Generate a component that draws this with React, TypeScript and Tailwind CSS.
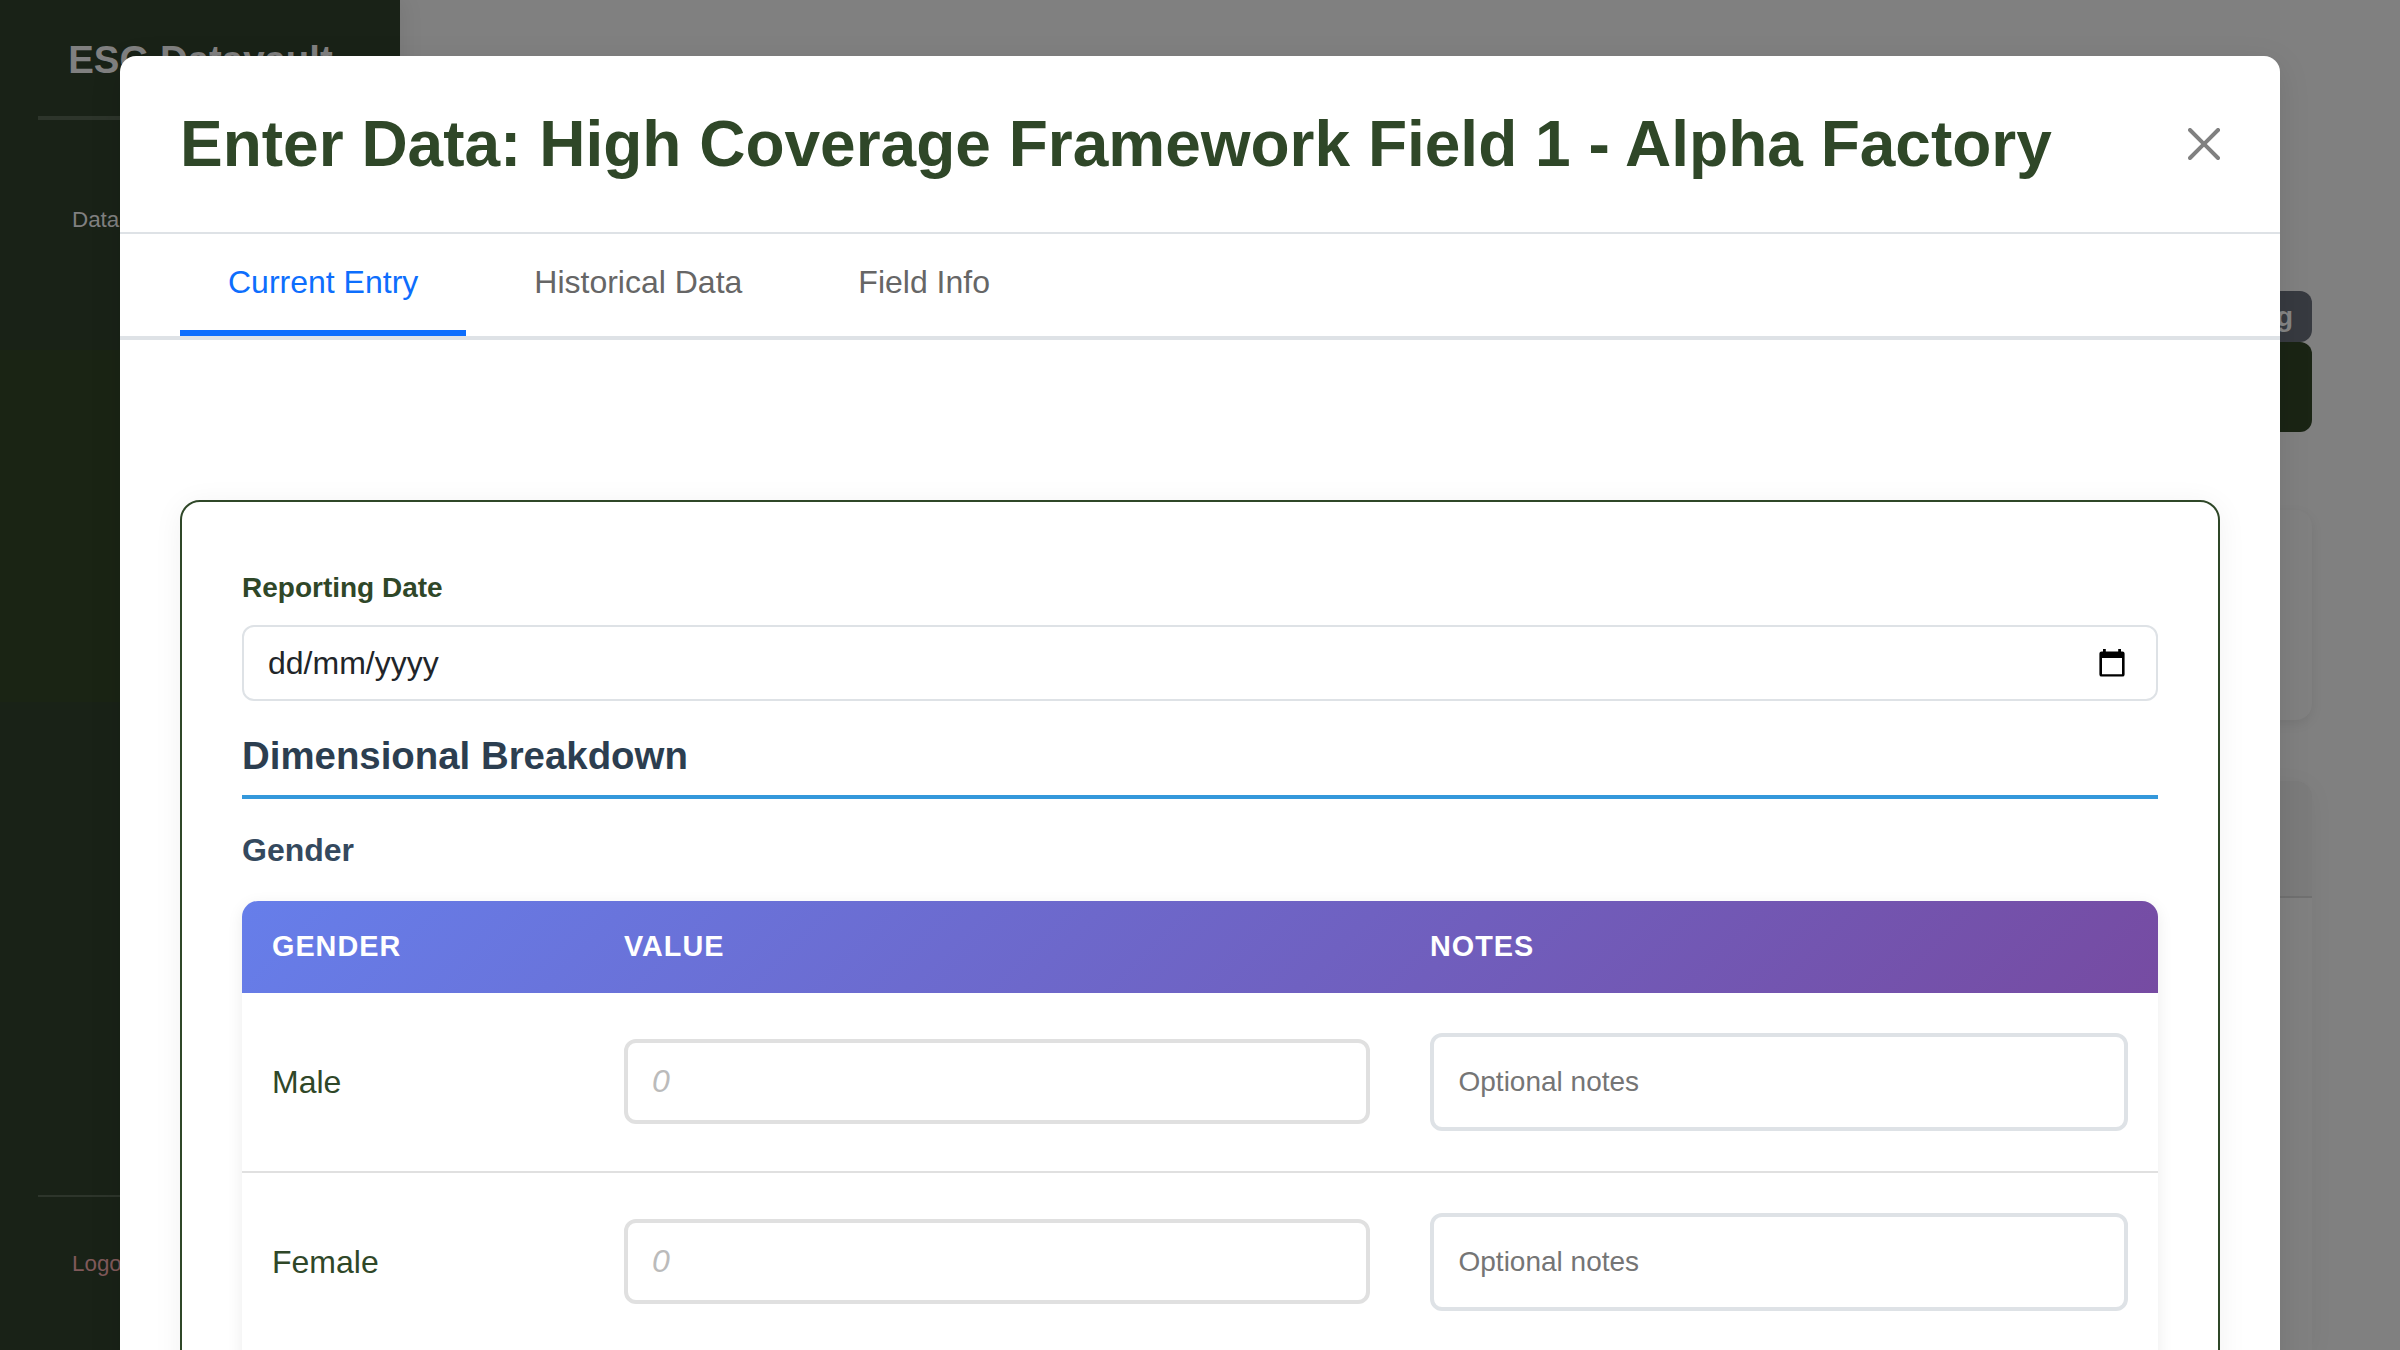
import type { ReactNode } from "react";

const tabs = ["Current Entry", "Historical Data", "Field Info"];
const rows = ["Male", "Female"];

function CloseIcon() {
  return (
    <svg viewBox="0 0 16 16" className="size-8 fill-[#808080]">
      <path d="M.293.293a1 1 0 0 1 1.414 0L8 6.586 14.293.293a1 1 0 1 1 1.414 1.414L9.414 8l6.293 6.293a1 1 0 0 1-1.414 1.414L8 9.414l-6.293 6.293a1 1 0 0 1-1.414-1.414L6.586 8 .293 1.707a1 1 0 0 1 0-1.414z" />
    </svg>
  );
}

function CalendarIcon() {
  return (
    <svg viewBox="0 0 26 28" className="-mt-px h-7 w-[26px] fill-black">
      <path
        fillRule="evenodd"
        d="M4 0h2.8v2.4h12.4V0H22v2.4h1.4A2.2 2.2 0 0 1 25.6 4.6v20.8a2.2 2.2 0 0 1-2.2 2.2H2.6A2.2 2.2 0 0 1 .4 25.4V4.6A2.2 2.2 0 0 1 2.6 2.4H4zM3 9v16.2h20V9z"
      />
    </svg>
  );
}

function Sidebar() {
  return (
    <aside className="flex w-[400px] shrink-0 flex-col bg-[linear-gradient(to_bottom,#192217_350px,#1a2414_350px,#1a2414_702px,#192217_702px)] px-[38px] shadow-[4px_0_20px_rgba(0,0,0,0.07)]">
      <div className="flex h-[120px] justify-center border-b-4 border-[#2d352b] pt-[38px] pl-px">
        <span className="text-[38.4px] leading-[44px] font-bold whitespace-nowrap text-[#808080]">ESG Datavault</span>
      </div>
      <nav className="mt-[87px] flex-1 pl-[34px] text-[22.4px] leading-[26px] text-[#808080]">Data</nav>
      <div className="h-[155px] border-t-2 border-[#2d352b] pt-[54px] pl-[34px] text-[22.4px] leading-[26px] text-[#80595a]">
        Logout
      </div>
    </aside>
  );
}

function Page() {
  return (
    <div className="flex h-full bg-[#808080]">
      <Sidebar />
      <main className="flex flex-1 flex-col pt-[291px] pr-[88px] pl-12">
        <div className="flex h-[51px] items-center self-end rounded-xl bg-[#373a40] pr-[19px] pl-5 text-[28px] font-bold text-[#858585]">
          Pending
        </div>
        <div className="h-[90px] rounded-xl bg-[#1a2414]" />
        <div className="mt-[78px] h-[210px] rounded-2xl bg-[#808080] shadow-[0_4px_12px_rgba(0,0,0,0.08)]" />
        <div className="mt-[61px] flex-1 rounded-t-2xl bg-[#808080] shadow-[0_4px_24px_rgba(0,0,0,0.05)]">
          <div className="h-[117px] rounded-t-2xl border-b-2 border-[#707070] bg-[#7b7b7b]" />
        </div>
      </main>
    </div>
  );
}

function HeadCell({ children }: { children: ReactNode }) {
  return <div className="text-[28.8px] leading-[34px] font-bold tracking-[1px]">{children}</div>;
}

function GenderTable() {
  return (
    <div className="mt-8 h-[600px] rounded-2xl bg-white shadow-[0_4px_16px_rgba(0,0,0,0.08)]">
      <div className="grid h-[92px] grid-cols-[352px_806px_1fr] rounded-t-2xl bg-[linear-gradient(135deg,#667eea_0%,#764ba2_100%)] pt-[28px] pl-[30px] text-white">
        <HeadCell>GENDER</HeadCell>
        <HeadCell>VALUE</HeadCell>
        <HeadCell>NOTES</HeadCell>
      </div>
      {rows.map((name) => (
        <div
          key={name}
          className="grid h-[180px] grid-cols-[352px_746px_698px] items-center border-b-2 border-[#e0e0e0] pl-[30px]"
        >
          <span className="text-[32px] leading-9 text-[#2f4728]">{name}</span>
          <input
            placeholder="0"
            className="-mt-[15px] mb-[-13px] h-[85px] w-[746px] rounded-xl border-4 border-[#e0e0e0] bg-white px-6 text-[32px] placeholder:text-[#bbbbbb] placeholder:italic"
          />
          <input
            placeholder="Optional notes"
            className="ml-[60px] h-[98px] w-[698px] rounded-xl border-4 border-[#dee2e6] bg-white pr-6 pl-[24.5px] text-[28px] placeholder:text-[#757575]"
          />
        </div>
      ))}
    </div>
  );
}

function EntryForm() {
  return (
    <section className="mx-[60px] mt-40 h-[1200px] rounded-[20px] border-2 border-[#2f4728] bg-white px-[60px] pt-[70px] shadow-[0_4px_30px_rgba(0,0,0,0.06)]">
      <label className="block text-[28px] leading-8 font-bold text-[#2f4728]">Reporting Date</label>
      <div className="mt-[21px] flex h-[76px] items-center justify-between rounded-xl border-2 border-[#dee2e6] pr-[31px] pl-6 text-[32px] text-[#212529]">
        <span>dd/mm/yyyy</span>
        <CalendarIcon />
      </div>
      <h2 className="mt-[33px] h-[65px] border-b-4 border-[#3498db] text-[38.4px] leading-[44px] font-bold text-[#2c3e50]">
        Dimensional Breakdown
      </h2>
      <h3 className="mt-8 text-[32px] leading-[38px] font-bold text-[#34495e]">Gender</h3>
      <GenderTable />
    </section>
  );
}

function Modal() {
  return (
    <div
      role="dialog"
      className="absolute top-14 left-[120px] h-[1600px] w-[2160px] rounded-2xl bg-white shadow-[0_8px_32px_rgba(0,0,0,0.1)]"
    >
      <header className="flex h-[178px] items-center justify-between border-b-2 border-[#dee2e6] px-[60px]">
        <h1 className="text-[64px] leading-[76px] font-bold whitespace-nowrap text-[#2f4728]">
          Enter Data: High Coverage Framework Field 1 - Alpha Factory
        </h1>
        <CloseIcon />
      </header>
      <nav className="flex h-[106px] gap-5 border-b-4 border-[#dee2e6] px-[60px]">
        {tabs.map((tab, i) => (
          <button
            key={tab}
            className={
              i === 0
                ? "flex border-b-[6px] border-[#0d6efd] px-12 pt-[30px] text-[32px] leading-9 text-[#0d6efd]"
                : "flex px-12 pt-[30px] text-[32px] leading-9 text-[#666666]"
            }
          >
            {tab}
          </button>
        ))}
      </nav>
      <EntryForm />
    </div>
  );
}

export default function App() {
  return (
    <div className="relative h-[1350px] w-[2400px] overflow-hidden font-['Liberation_Sans',Arial,sans-serif]">
      <Page />
      <Modal />
    </div>
  );
}
